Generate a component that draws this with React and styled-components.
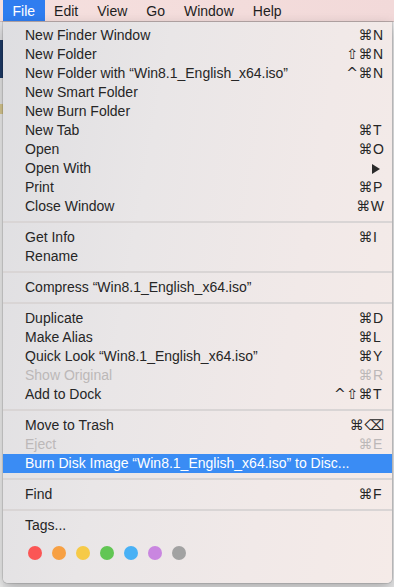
import React from "react";
import styled, { createGlobalStyle } from "styled-components";

const Global = createGlobalStyle`
  html, body { margin: 0; padding: 0; }
  body {
    width: 394px;
    height: 587px;
    overflow: hidden;
    background: #e9e9ea;
    font-family: "Liberation Sans", "DejaVu Sans", Arial, sans-serif;
    -webkit-font-smoothing: antialiased;
  }
`;

const Screen = styled.div`
  width: 394px;
  height: 587px;
  display: flex;
  flex-direction: column;
`;

const MenuBar = styled.div`
  height: 22px;
  box-sizing: border-box;
  display: flex;
  align-items: stretch;
  padding-left: 3px;
  background: linear-gradient(90deg, #f5dfde 0%, #f3dcdb 60%, #f2d9d9 100%);
  border-bottom: 1px solid #cdbcbc;
`;

const BarItem = styled.div`
  padding: 0 9.5px;
  font-size: 14px;
  line-height: 22px;
  color: ${(p) => (p.$active ? "#ffffff" : "#1e1e1e")};
  background: ${(p) => (p.$active ? "#2f7df0" : "transparent")};
`;

const Stage = styled.div`
  flex: 1;
  display: flex;
  align-items: flex-start;
`;

const LeftStrip = styled.div`
  width: 3px;
  align-self: stretch;
  background: linear-gradient(
    to bottom,
    #e2e2e4 0px,
    #e2e2e4 18px,
    #1d3a66 18px,
    #1d3a66 56px,
    #e6e6e6 56px,
    #e6e6e6 82px,
    #d8c890 82px,
    #d8c890 92px,
    #ededed 92px
  );
`;

const Menu = styled.div`
  width: 389px;
  box-sizing: border-box;
  padding: 4px 0 12px;
  border-radius: 0 0 5px 5px;
  background: linear-gradient(100deg, #dedee1 0%, #e9e6e7 35%, #f1e9e8 70%, #f5ebe8 100%);
  box-shadow: 0 0 0 1px rgba(0, 0, 0, 0.1), 0 5px 14px rgba(0, 0, 0, 0.28);
  display: flex;
  flex-direction: column;
`;

const Row = styled.div`
  height: 19px;
  display: flex;
  align-items: center;
  padding: 0 8px 0 22px;
  font-size: 14px;
  line-height: 19px;
  white-space: nowrap;
  color: ${(p) => (p.$highlight ? "#ffffff" : p.$disabled ? "#bcb8b8" : "#262626")};
  background: ${(p) => (p.$highlight ? "#3a8cf4" : "transparent")};
`;

const Label = styled.span`
  flex: 1;
`;

const Shortcut = styled.span`
  display: flex;
  align-items: center;
  margin-left: 12px;
`;

const Mods = styled.span`
  font-family: "DejaVu Sans", sans-serif;
  font-size: 14px;
  letter-spacing: 0.5px;
`;

const Key = styled.span`
  min-width: 11px;
  text-align: left;
  font-size: 14px;
`;

const DelKey = styled.span`
  font-family: "DejaVu Sans", sans-serif;
  font-size: 14px;
  min-width: 11px;
`;

const Separator = styled.div`
  height: 12px;
  display: flex;
  align-items: center;
  &::after {
    content: "";
    flex: 1;
    height: 2px;
    background: #d9d5d5;
  }
`;

const DotsRow = styled.div`
  display: flex;
  gap: 10px;
  padding: 11px 0 11px 25px;
`;

const Dot = styled.span`
  width: 14px;
  height: 14px;
  border-radius: 50%;
  background: ${(p) => p.$color};
`;

const Arrow = styled.svg`
  width: 8px;
  height: 10px;
  margin-right: 4px;
`;

const items = [
  { label: "New Finder Window", mods: "⌘", key: "N" },
  { label: "New Folder", mods: "⇧⌘", key: "N" },
  { label: "New Folder with “Win8.1_English_x64.iso”", mods: "^⌘", key: "N" },
  { label: "New Smart Folder" },
  { label: "New Burn Folder" },
  { label: "New Tab", mods: "⌘", key: "T" },
  { label: "Open", mods: "⌘", key: "O" },
  { label: "Open With", submenu: true },
  { label: "Print", mods: "⌘", key: "P" },
  { label: "Close Window", mods: "⌘", key: "W" },
  { sep: true },
  { label: "Get Info", mods: "⌘", key: "I" },
  { label: "Rename" },
  { sep: true },
  { label: "Compress “Win8.1_English_x64.iso”" },
  { sep: true },
  { label: "Duplicate", mods: "⌘", key: "D" },
  { label: "Make Alias", mods: "⌘", key: "L" },
  { label: "Quick Look “Win8.1_English_x64.iso”", mods: "⌘", key: "Y" },
  { label: "Show Original", mods: "⌘", key: "R", disabled: true },
  { label: "Add to Dock", mods: "^⇧⌘", key: "T" },
  { sep: true },
  { label: "Move to Trash", mods: "⌘", del: true },
  { label: "Eject", mods: "⌘", key: "E", disabled: true },
  { label: "Burn Disk Image “Win8.1_English_x64.iso” to Disc...", highlight: true },
  { sep: true },
  { label: "Find", mods: "⌘", key: "F" },
  { sep: true },
  { label: "Tags..." },
];

const tagColors = ["#fb5655", "#f7a043", "#f6ca47", "#62c654", "#49b1f5", "#c986e0", "#a2a2a2"];

export default function App() {
  return (
    <>
      <Global />
      <Screen>
        <MenuBar>
          <BarItem $active>File</BarItem>
          <BarItem>Edit</BarItem>
          <BarItem>View</BarItem>
          <BarItem>Go</BarItem>
          <BarItem>Window</BarItem>
          <BarItem>Help</BarItem>
        </MenuBar>
        <Stage>
          <LeftStrip />
          <Menu>
            {items.map((it, i) =>
              it.sep ? (
                <Separator key={i} />
              ) : (
                <Row key={i} $disabled={it.disabled} $highlight={it.highlight}>
                  <Label>{it.label}</Label>
                  {it.submenu && (
                    <Arrow viewBox="0 0 8 10">
                      <path d="M0 0 L8 5 L0 10 Z" fill="#2a2a2a" />
                    </Arrow>
                  )}
                  {it.mods && (
                    <Shortcut>
                      <Mods>{it.mods}</Mods>
                      {it.del ? <DelKey>⌫</DelKey> : <Key>{it.key}</Key>}
                    </Shortcut>
                  )}
                </Row>
              )
            )}
            <DotsRow>
              {tagColors.map((c) => (
                <Dot key={c} $color={c} />
              ))}
            </DotsRow>
          </Menu>
        </Stage>
      </Screen>
    </>
  );
}
